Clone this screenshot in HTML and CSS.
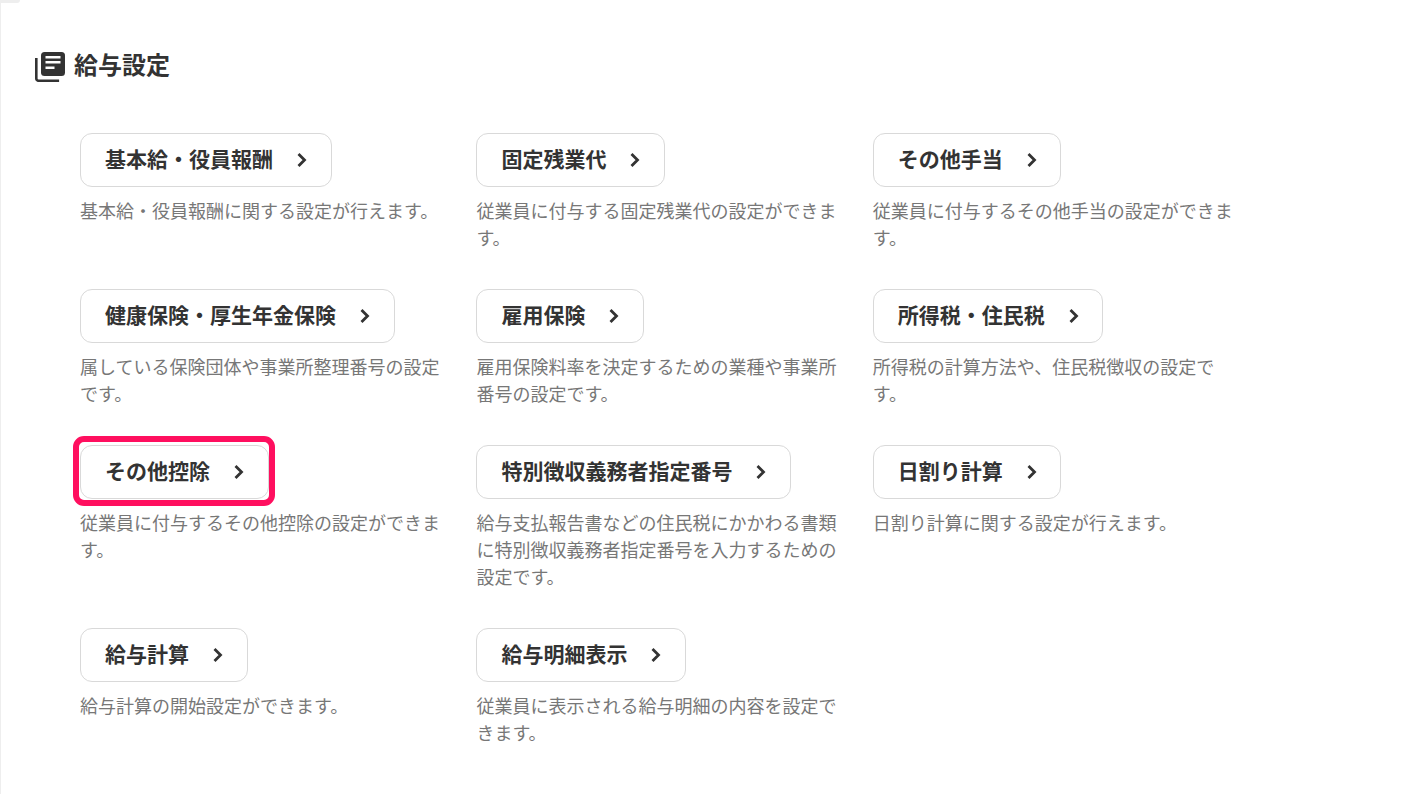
FILE: index.html
```html
<!DOCTYPE html>
<html lang="ja">
<head>
    <title>給与設定</title>
    <link rel="stylesheet" href="styles.css">
</head>
<body>
    <div class="corner"></div>
    <div class="page">
        <h1 class="page-title">
            <svg class="title-icon" viewBox="0 0 30 30" width="30" height="30">
                <rect x="6" y="0" width="24" height="24" rx="3.5" fill="#333"/>
                <path d="M10.5 5.2h15M10.5 10.2h15M10.5 15.8h9" stroke="#fff" stroke-width="2.4" fill="none"/>
                <path d="M1.3 6v20.5a2.3 2.3 0 0 0 2.3 2.3h20.5" stroke="#333" stroke-width="2.6" fill="none"/>
            </svg>
            <span class="title-text">給与設定</span>
        </h1>

        <div class="settings-grid">
            <div class="setting">
                <a class="setting-button">基本給・役員報酬<svg class="chevron" viewBox="0 0 12 16"><path d="M2.5 2l6 6-6 6"/></svg></a>
                <p class="setting-text">基本給・役員報酬に関する設定が行えます。</p>
            </div>
            <div class="setting">
                <a class="setting-button">固定残業代<svg class="chevron" viewBox="0 0 12 16"><path d="M2.5 2l6 6-6 6"/></svg></a>
                <p class="setting-text">従業員に付与する固定残業代の設定ができます。</p>
            </div>
            <div class="setting">
                <a class="setting-button">その他手当<svg class="chevron" viewBox="0 0 12 16"><path d="M2.5 2l6 6-6 6"/></svg></a>
                <p class="setting-text">従業員に付与するその他手当の設定ができます。</p>
            </div>
            <div class="setting">
                <a class="setting-button">健康保険・厚生年金保険<svg class="chevron" viewBox="0 0 12 16"><path d="M2.5 2l6 6-6 6"/></svg></a>
                <p class="setting-text">属している保険団体や事業所整理番号の設定です。</p>
            </div>
            <div class="setting">
                <a class="setting-button">雇用保険<svg class="chevron" viewBox="0 0 12 16"><path d="M2.5 2l6 6-6 6"/></svg></a>
                <p class="setting-text">雇用保険料率を決定するための業種や事業所番号の設定です。</p>
            </div>
            <div class="setting">
                <a class="setting-button">所得税・住民税<svg class="chevron" viewBox="0 0 12 16"><path d="M2.5 2l6 6-6 6"/></svg></a>
                <p class="setting-text">所得税の計算方法や、住民税徴収の設定です。</p>
            </div>
            <div class="setting">
                <a class="setting-button highlighted">その他控除<svg class="chevron" viewBox="0 0 12 16"><path d="M2.5 2l6 6-6 6"/></svg></a>
                <p class="setting-text">従業員に付与するその他控除の設定ができます。</p>
            </div>
            <div class="setting">
                <a class="setting-button">特別徴収義務者指定番号<svg class="chevron" viewBox="0 0 12 16"><path d="M2.5 2l6 6-6 6"/></svg></a>
                <p class="setting-text">給与支払報告書などの住民税にかかわる書類に特別徴収義務者指定番号を入力するための設定です。</p>
            </div>
            <div class="setting">
                <a class="setting-button">日割り計算<svg class="chevron" viewBox="0 0 12 16"><path d="M2.5 2l6 6-6 6"/></svg></a>
                <p class="setting-text">日割り計算に関する設定が行えます。</p>
            </div>
            <div class="setting">
                <a class="setting-button">給与計算<svg class="chevron" viewBox="0 0 12 16"><path d="M2.5 2l6 6-6 6"/></svg></a>
                <p class="setting-text">給与計算の開始設定ができます。</p>
            </div>
            <div class="setting">
                <a class="setting-button">給与明細表示<svg class="chevron" viewBox="0 0 12 16"><path d="M2.5 2l6 6-6 6"/></svg></a>
                <p class="setting-text">従業員に表示される給与明細の内容を設定できます。</p>
            </div>
        </div>
    </div>
</body>
</html>
```

FILE: styles.css
```css
* {
    box-sizing: border-box;
}

body {
    margin: 0;
    background-color: #fff;
    color: #333;
    font-family: "Noto Sans CJK JP", "Noto Sans", sans-serif;
    border-left: 1px solid #eee;
    min-height: 794px;
}

.corner {
    position: absolute;
    top: 0;
    left: 0;
    width: 20px;
    height: 3px;
    background-color: #eee;
    border-radius: 0 0 6px 0;
}

.page {
    padding: 52px 0 0 34px;
}

.page-title {
    display: flex;
    align-items: center;
    gap: 9px;
    margin: 0;
    font-size: 24px;
    font-weight: 700;
    line-height: 33px;
}

.title-text {
    margin-top: -7px;
}

.title-icon {
    display: block;
    flex: none;
}

.settings-grid {
    display: grid;
    grid-template-columns: repeat(3, 360px);
    column-gap: 36.4px;
    row-gap: 38px;
    margin: 51px 0 0 45px;
}

.setting-button {
    position: relative;
    display: inline-flex;
    align-items: center;
    height: 54px;
    padding: 0 22.5px 4px 24px;
    background-color: #fff;
    border: 1px solid #d9d9d9;
    border-radius: 12px;
    font-size: 21px;
    font-weight: 700;
    color: #333;
}

.chevron {
    width: 12px;
    height: 16px;
    margin: 4px 0 0 23px;
    fill: none;
    stroke: #333;
    stroke-width: 2.8;
}

.highlighted::after {
    content: "";
    position: absolute;
    top: -10px;
    left: -8px;
    right: -7px;
    bottom: -8px;
    border: 6px solid #ff0f5f;
    border-radius: 11px;
}

.setting-text {
    margin: 10px 0 0;
    font-size: 18px;
    line-height: 27px;
    color: #777;
}
```
